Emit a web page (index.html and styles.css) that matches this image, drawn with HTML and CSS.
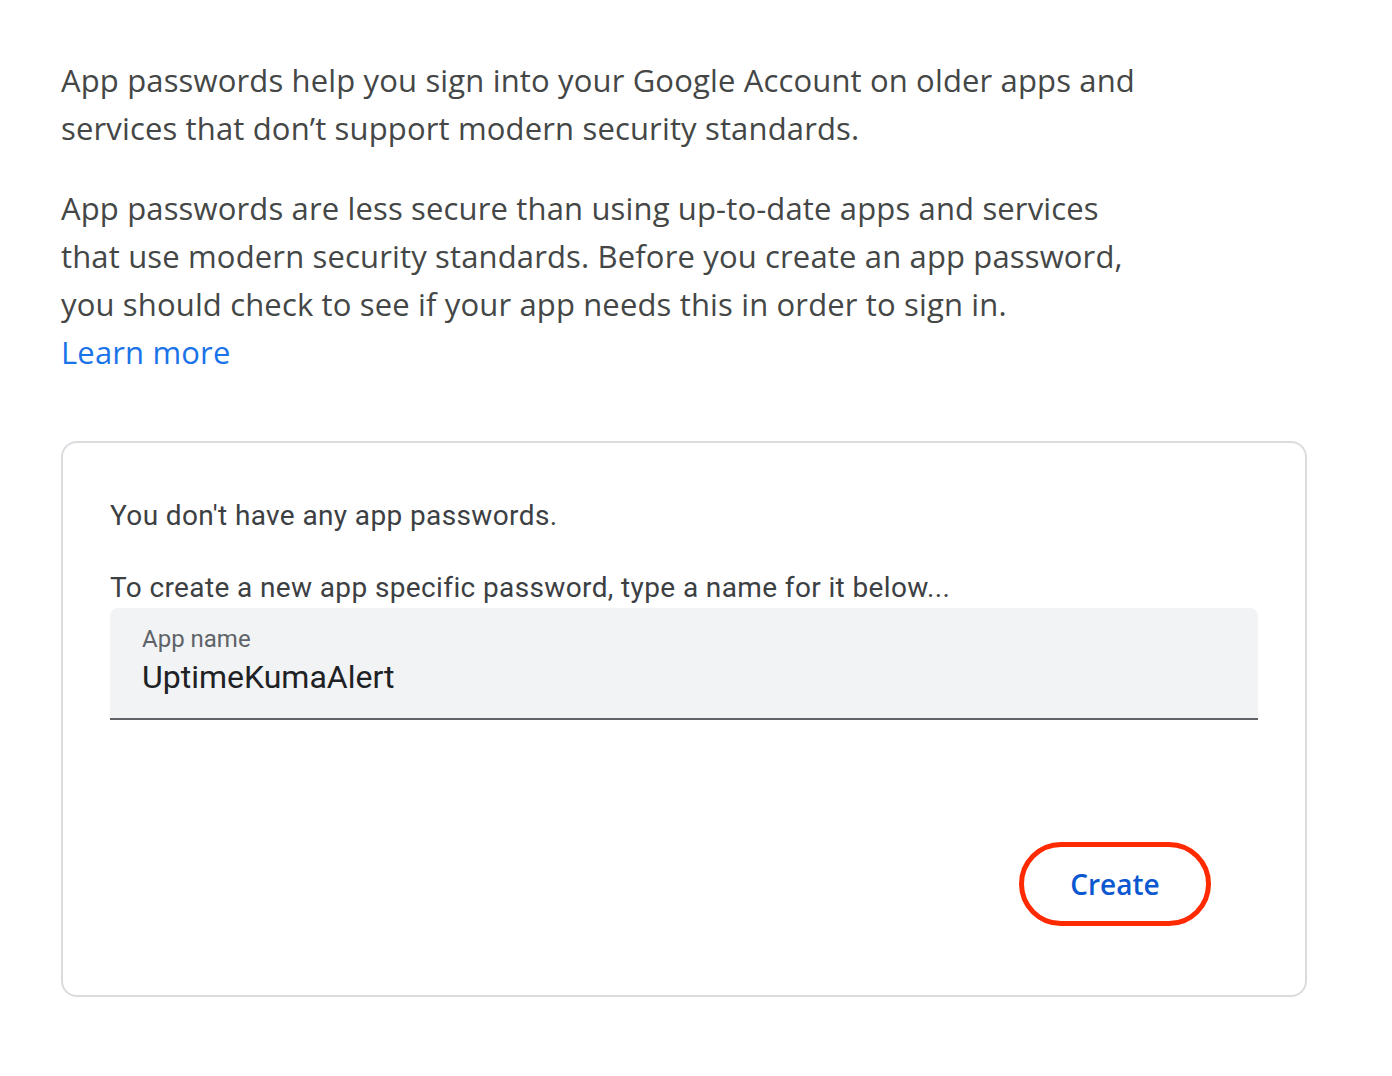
FILE: index.html
```html
<!DOCTYPE html>
<html>
<head>
<meta charset="utf-8">
<link rel="stylesheet" href="styles.css">
</head>
<body>
<main class="page">
  <p class="intro">App passwords help you sign into your Google Account on older apps and<br>services that don’t support modern security standards.</p>
  <p class="intro">App passwords are less secure than using up-to-date apps and services<br>that use modern security standards. Before you create an app password,<br>you should check to see if your app needs this in order to sign in.<br><a class="link" href="#">Learn more</a></p>
  <section class="card">
    <p class="note">You don't have any app passwords.</p>
    <p class="note hint">To create a new app specific password, type a name for it below...</p>
    <div class="field">
      <span class="field-label">App name</span>
      <span class="field-value">UptimeKumaAlert</span>
    </div>
    <div class="actions">
      <button class="create">Create</button>
    </div>
  </section>
</main>
</body>
</html>
```
FILE: styles.css
```css
html, body {
  margin: 0;
  padding: 0;
  background: #ffffff;
}
.page {
  padding: 56px 85px 0 61px;
  font-family: "Open Sans", "Noto Sans", sans-serif;
}
.intro {
  margin: 0 0 32px 0;
  font-size: 31px;
  line-height: 48px;
  color: #444746;
  letter-spacing: 0.15px;
}
.link {
  color: #1a73e8;
  text-decoration: none;
}
.card {
  margin-top: 65px;
  border: 2px solid #dadce0;
  border-radius: 16px;
  padding: 53px 47px 69px 47px;
  width: 1148px;
}
.note {
  margin: 0;
  font-family: Roboto, "Liberation Sans", sans-serif;
  font-size: 28px;
  line-height: 40px;
  letter-spacing: 0.38px;
  color: #3c4043;
}
.hint {
  margin-top: 32px;
}
.field {
  display: flex;
  flex-direction: column;
  background: #f1f3f4;
  border-radius: 8px 8px 0 0;
  border-bottom: 2px solid #5f6368;
  padding: 16px 32px 0 32px;
  height: 94px;
  font-family: Roboto, "Liberation Sans", sans-serif;
}
.field-label {
  font-size: 24px;
  line-height: 30px;
  color: #5f6368;
}
.field-value {
  font-size: 32px;
  line-height: 46px;
  color: #202124;
}
.actions {
  display: flex;
  justify-content: flex-end;
  margin-top: 122px;
  padding-right: 47px;
}
.create {
  width: 192px;
  height: 84px;
  border: 5px solid #ff2a00;
  border-radius: 42px;
  background: #ffffff;
  color: #0b57d0;
  font-family: "Open Sans", "Noto Sans", sans-serif;
  font-size: 28px;
  font-weight: 600;
  padding: 0;
  cursor: pointer;
}
```
